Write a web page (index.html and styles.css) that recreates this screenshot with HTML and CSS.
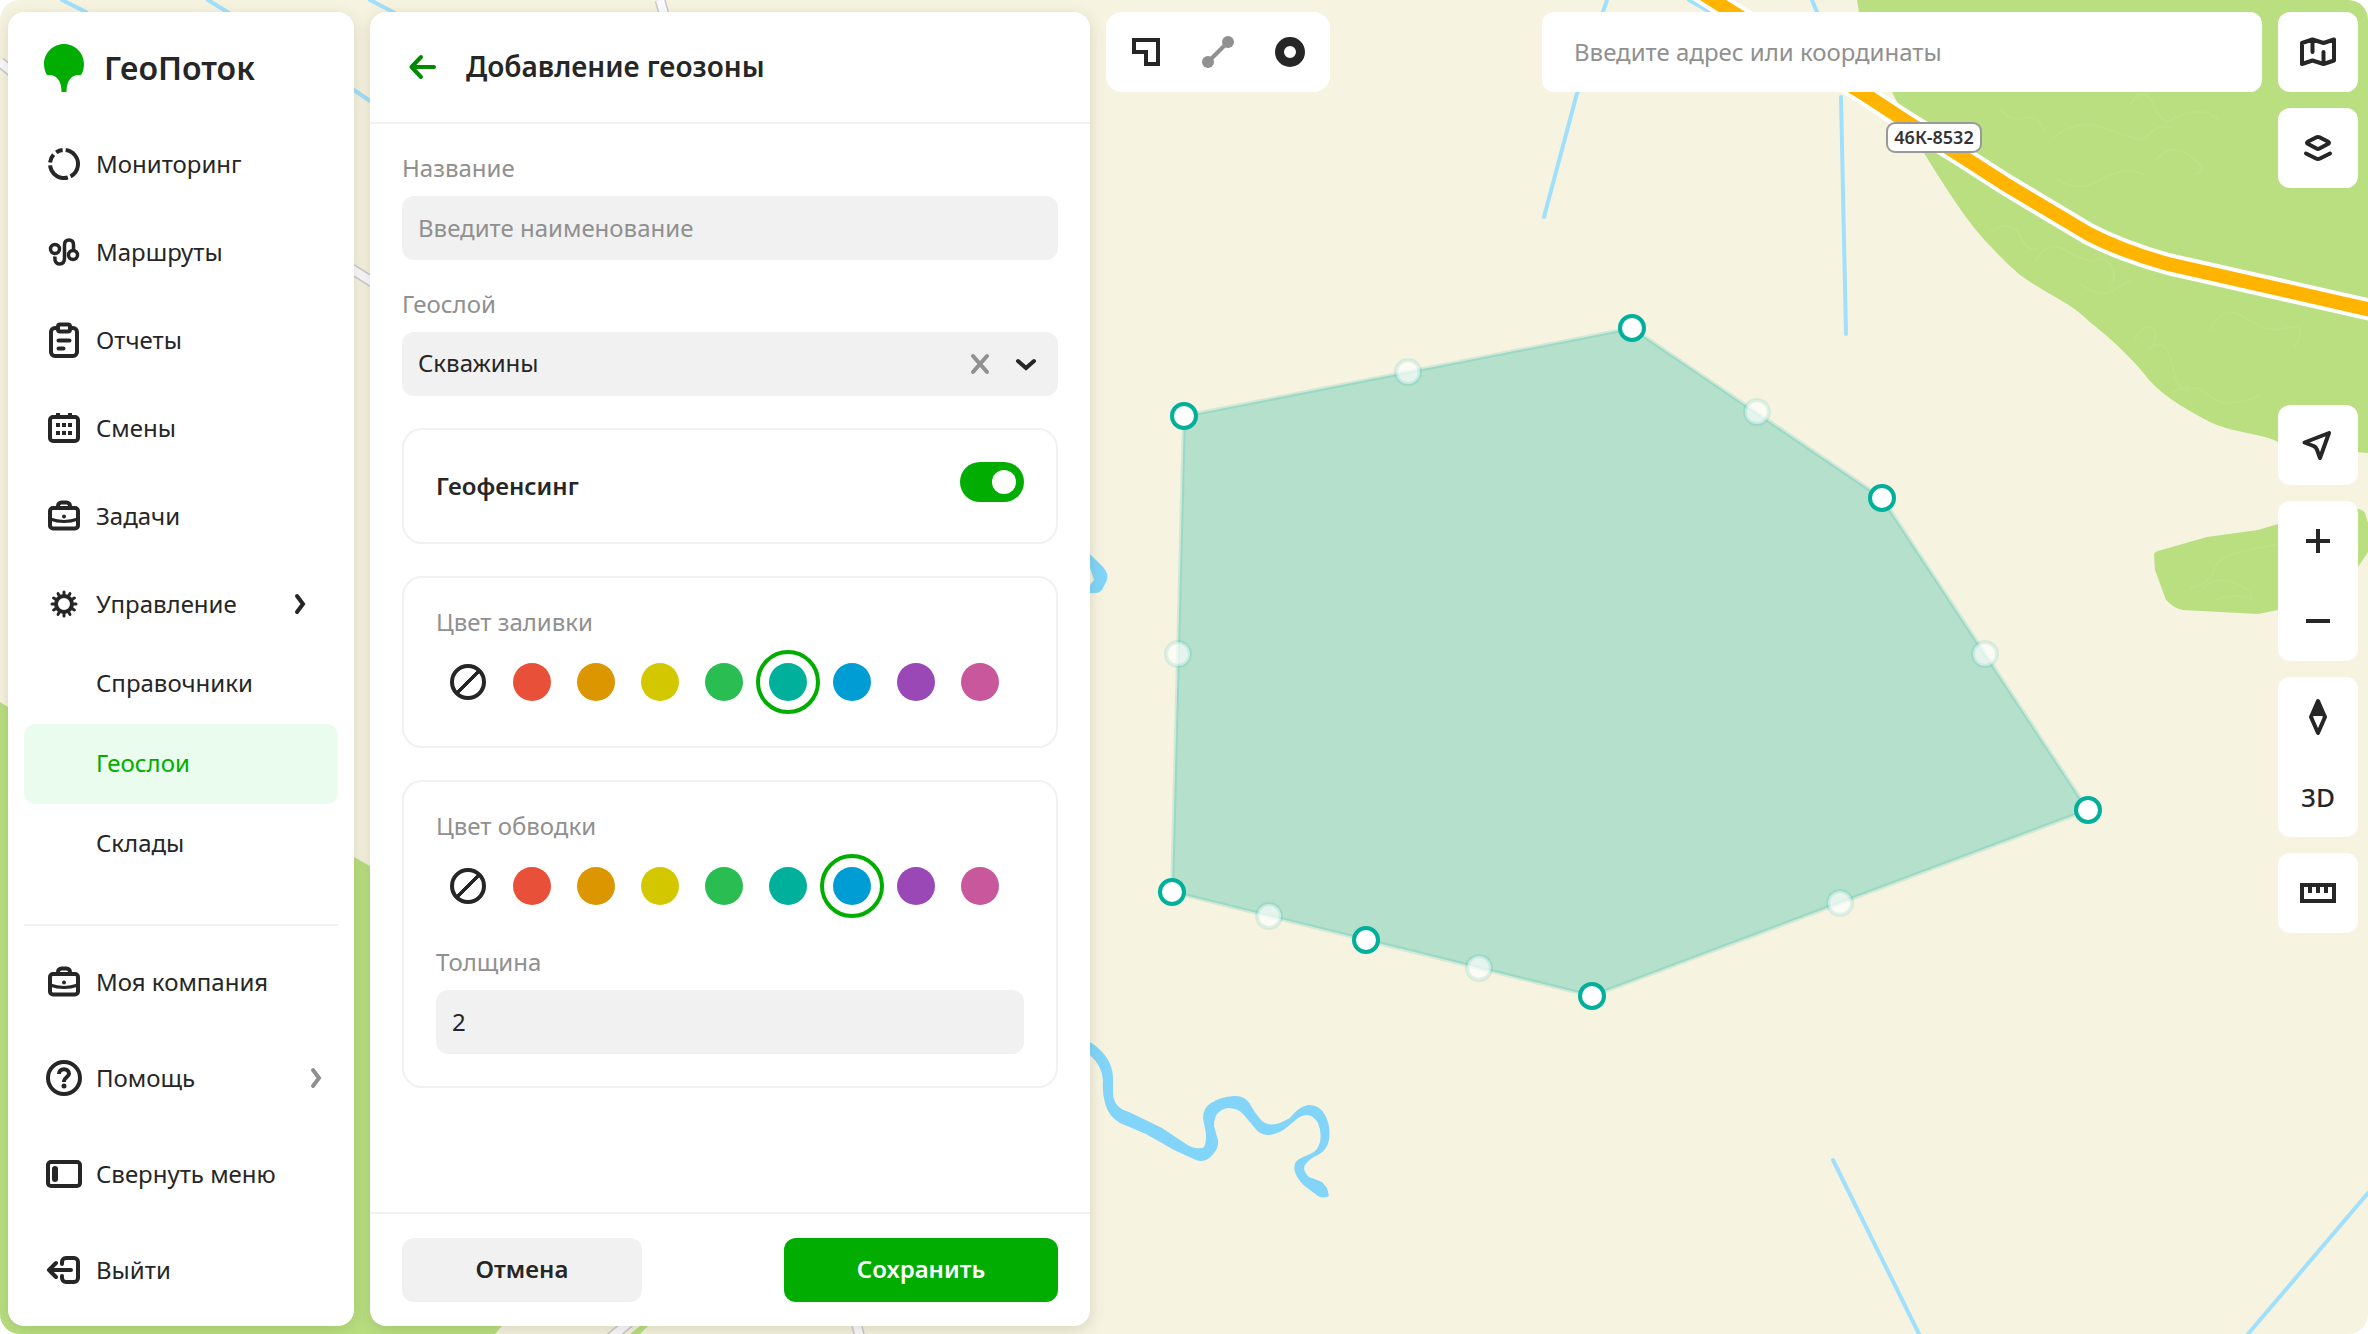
FILE: index.html
```html
<!DOCTYPE html>
<html lang="ru">
<head>
<meta charset="utf-8">
<title>ГеоПоток — Добавление геозоны</title>
<meta name="viewport" content="width=device-width, initial-scale=1">
<link rel="stylesheet" href="styles.css">
</head>
<body>
<div class="app">
  <svg class="map" viewBox="0 0 2368 1334" preserveAspectRatio="xMidYMid slice" role="img" aria-label="Карта с геозоной">
    <g class="forest">
      <path d="M0 702 8 707 354 857 370 866C430 1020 500 1180 502 1326L495 1334H0Z"/>
      <path d="M1857 0 1859 12 1892 92C1902 112 1913 132 1924 153Q1938 176 1956 203T1994 250Q2006 263 2020 275 2037 287 2057 298T2091 323Q2108 336 2125 353T2149 380Q2162 394 2180 405T2210 422 2247 433 2278 442Q2318 450 2368 453V0Z"/>
      <path d="M2158 551 2207 537 2258 530 2278 524 2350 508Q2362 508 2365 513L2368 523V552L2358 567C2340 594 2310 604 2278 610L2258 614 2183 610Q2175 609 2166 600L2155 570 2154 555Q2154 552 2158 551Z"/>
      <path d="M630 1334 640 1326H648L640 1334Z"/>
    </g>
    <g class="forest-lines">
      <path d="M2000 108q8 14 24 10t20 14M2052 138q26-20 52-10t40 12q12-18 30-12M2056 178q20 16 44 2t44-6M2130 104q14-20 24 2t20 12q30-14 44 2M2156 160q14-18 34-4t6 18M2035 262q12-24 34-10t32 6q20 10 10 26M1990 232q22-14 30 4t18 12M2080 284q20 14 30 8t22-12M2134 340q14-20 20-10t-6 20q18-16 24 14t18 26M2210 330q14-28 36-12t40 10q24-6 8 20M2172 392q24-10 38 4t50 0"/>
      <path d="M2190 588q20-4 24-18t34-20 32-6M2202 590q10-14 30-8t20 18M2214 600q26-8 38 0"/>
    </g>
    <g class="water">
      <path d="M62 0 86 12M208 0 354 90 370 101M370 0 395 13M1607 0 1603 12 1576 97 1544 217M1689 0 1710 12M1812 0 1817 12M1841 97 1846 334M1833 1160 1919 1334M2368 1193 2248 1334"/>
    </g>
    <g class="river">
      <path d="M1090 554 1103 567Q1109 574 1107 580L1102 590Q1098 594 1090 593V585L1094 580 1090 568Z"/>
      <path d="M1090 1055Q1102 1066 1103 1080 1102 1092 1105 1103 1108 1116 1120 1123L1146 1134 1174 1150 1196 1160Q1206 1164 1214 1153 1219 1147 1218 1140L1214 1126Q1214 1110 1228 1108 1238 1108 1243 1114L1254 1127Q1260 1136 1270 1135 1280 1133 1286 1128L1298 1118Q1310 1110 1318 1123 1322 1132 1320 1142 1318 1151 1310 1154L1301 1158Q1292 1162 1295 1172 1298 1181 1306 1187L1318 1196Q1324 1199 1329 1196L1327 1188 1322 1182 1309 1177Q1302 1170 1305 1165 1310 1158 1318 1155 1327 1150 1329 1140 1331 1126 1325 1115 1319 1104 1308 1105 1298 1107 1290 1118L1280 1123Q1268 1127 1261 1120 1254 1112 1250 1104 1244 1095 1234 1096 1220 1097 1211 1103 1203 1108 1203 1118L1206 1134Q1206 1148 1202 1148 1192 1149 1186 1144L1162 1128 1129 1112Q1114 1108 1113 1094L1113 1077Q1112 1056 1090 1042Z"/>
    </g>
    <g class="road-edge">
      <path d="M0 62 12 72M350 268 374 283M660 0 664 14M608 1340 632 1320M856 1322 860 1338"/>
    </g>
    <g class="road-fill">
      <path d="M0 62 12 72M350 268 374 283M660 0 664 14M608 1340 632 1320M856 1322 860 1338"/>
    </g>
    <path class="highway-edge" d="M1694-12 1732 12 1861 92 1907 122 1960 155 2005 184 2087 233Q2104 242 2125 250T2168 264L2230 278 2380 312"/>
    <path class="highway" d="M1694-12 1732 12 1861 92 1907 122 1960 155 2005 184 2087 233Q2104 242 2125 250T2168 264L2230 278 2380 312"/>
    <g>
      <rect class="shield" x="1887" y="123" width="94" height="29" rx="8"/>
      <text class="shield-text" x="1934" y="144">46К-8532</text>
    </g>
    <polygon class="zone" points="1184,416 1632,328 1882,498 2088,810 1592,996 1366,940 1172,892"/>
    <g class="midpoint">
      <circle cx="1408" cy="372" r="12"/><circle cx="1757" cy="412" r="12"/><circle cx="1985" cy="654" r="12"/><circle cx="1840" cy="903" r="12"/><circle cx="1479" cy="968" r="12"/><circle cx="1269" cy="916" r="12"/><circle cx="1178" cy="654" r="12"/>
    </g>
    <g class="vertex">
      <circle cx="1184" cy="416" r="12"/><circle cx="1632" cy="328" r="12"/><circle cx="1882" cy="498" r="12"/><circle cx="2088" cy="810" r="12"/><circle cx="1592" cy="996" r="12"/><circle cx="1366" cy="940" r="12"/><circle cx="1172" cy="892" r="12"/>
    </g>
  </svg>

  <aside class="sidebar">
    <div class="brand">
      <svg class="brand-mark" viewBox="0 0 40 48" aria-hidden="true"><path d="M20 0C31 0 40 9 40 20c0 4-1 8-3 11h-2C27 31 22.500 37 22.500 48h-5C17.500 37 13 31 5 31H3C1 28 0 24 0 20 0 9 9 0 20 0Z"/></svg>
      <span class="brand-name">ГеоПоток</span>
    </div>
    <nav class="nav">
      <a class="nav-item" href="#monitoring"><svg class="icon" viewBox="0 0 40 40"><circle cx="20" cy="20" r="14" pathLength="360" stroke-dasharray="145 12 100 12 36 14 28 13" transform="rotate(-83 20 20)"/></svg>Мониторинг</a>
      <a class="nav-item" href="#routes"><svg class="icon" viewBox="0 0 40 40"><g stroke-width="3.500"><circle cx="11" cy="17" r="4.500"/><circle cx="29" cy="23" r="4.500"/><path d="M11 24.500c-.5 4.500 1 7.500 4.500 7.500s5-2.500 5-6V13c0-3 1.500-5 4.500-5s4.500 2 4.500 5v5"/></g></svg>Маршруты</a>
      <a class="nav-item" href="#reports"><svg class="icon" viewBox="0 0 40 40"><rect x="7" y="8" width="26" height="28" rx="4"/><rect class="paper" x="14" y="4.500" width="12" height="7" rx="2"/><path d="M14.500 20.500h11M14.500 28.500h5" stroke-linecap="round"/></svg>Отчеты</a>
      <a class="nav-item" href="#shifts"><svg class="icon" viewBox="0 0 40 40"><rect x="6" y="9" width="28" height="24" rx="3"/><path d="M14 5v4M26 5v4M12 17h4M18 17h4M24 17h4M12 25h4M18 25h4M24 25h4"/></svg>Смены</a>
      <a class="nav-item" href="#tasks"><svg class="icon" viewBox="0 0 40 40"><rect x="6" y="12" width="28" height="20.500" rx="3"/><path d="M14 12v-2a3.500 3.500 0 0 1 3.500-3.500h5A3.500 3.500 0 0 1 26 10v2"/><path d="M6 23q14 5 28 0" stroke-width="3"/><circle class="solid" cx="20" cy="20.500" r="2"/></svg>Задачи</a>
      <a class="nav-item" href="#management"><svg class="icon" viewBox="0 0 40 40"><circle cx="20" cy="20" r="8"/><path d="M20 10V8M20 30v2M10 20H8M30 20h2M15 11.300l-1-1.700M25 11.300l1-1.700M15 28.700l-1 1.700M25 28.700l1 1.700M11.300 15l-1.700-1M28.700 15l1.700-1M11.300 25l-1.700 1M28.700 25l1.700 1" stroke-linecap="round" stroke-width="3"/></svg>Управление<svg class="chevron" viewBox="0 0 12 24"><path d="M3 4 9 12 3 20"/></svg></a>
      <div class="subnav">
        <a class="sub-item" href="#directories">Справочники</a>
        <a class="sub-item active" href="#geolayers" aria-current="page">Геослои</a>
        <a class="sub-item" href="#warehouses">Склады</a>
      </div>
    </nav>
    <nav class="nav-bottom">
      <a class="nav-item" href="#company"><svg class="icon" viewBox="0 0 40 40"><rect x="6" y="12" width="28" height="20.500" rx="3"/><path d="M14 12v-2a3.500 3.500 0 0 1 3.500-3.500h5A3.500 3.500 0 0 1 26 10v2"/><path d="M6 23q14 5 28 0" stroke-width="3"/><circle class="solid" cx="20" cy="20.500" r="2"/></svg>Моя компания</a>
      <a class="nav-item" href="#help"><svg class="icon" viewBox="0 0 40 40"><circle cx="20" cy="20" r="16"/><path d="M15 16c0-3 2-4.800 5-4.800s5 1.800 5 4.600c0 3.200-5 3.700-5 7.200v1"/><circle class="solid" cx="20" cy="28" r="2.500"/></svg>Помощь<svg class="chevron muted" viewBox="0 0 12 24"><path d="M3 4 9 12 3 20"/></svg></a>
      <button class="nav-item" type="button"><svg class="icon" viewBox="0 0 40 40"><rect x="4" y="8" width="32" height="24" rx="3"/><rect class="solid" x="8" y="12" width="6" height="16" rx="3"/></svg>Свернуть меню</button>
      <button class="nav-item" type="button"><svg class="icon" viewBox="0 0 40 40"><path d="M27 20H5M12 13l-7 7 7 7M18 14v-2a4 4 0 0 1 4-4h8a4 4 0 0 1 4 4v16a4 4 0 0 1-4 4h-8a4 4 0 0 1-4-4v-2" stroke-linecap="round" stroke-linejoin="round"/></svg>Выйти</button>
    </nav>
  </aside>

  <form class="panel">
    <header class="panel-head">
      <button class="back" type="button" aria-label="Назад"><svg class="icon" viewBox="0 0 40 40"><path d="M32 20H10M19 10 9.500 20 19 30" stroke-linecap="round" stroke-linejoin="round"/></svg></button>
      <h1 class="panel-title">Добавление геозоны</h1>
    </header>
    <div class="panel-body">
      <div class="field">
        <label class="label" for="zone-name">Название</label>
        <input class="control" id="zone-name" type="text" placeholder="Введите наименование">
      </div>
      <div class="field">
        <label class="label" for="zone-layer">Геослой</label>
        <div class="select">
          <select class="control" id="zone-layer"><option>Скважины</option></select>
          <div class="select-tools">
            <button class="clear" type="button" aria-label="Очистить"><svg viewBox="0 0 24 24"><path d="M5 4l14 16M19 4 5 20"/></svg></button>
            <svg class="select-arrow" viewBox="0 0 24 24" aria-hidden="true"><path d="M4 9l8 7 8-7"/></svg>
          </div>
        </div>
      </div>
      <div class="card card-row">
        <label class="card-title" for="geofencing">Геофенсинг</label>
        <input class="toggle" id="geofencing" type="checkbox" checked>
      </div>
      <div class="card">
        <div class="field">
          <span class="label" id="fill-label">Цвет заливки</span>
          <div class="swatches" role="radiogroup" aria-labelledby="fill-label">
            <input class="swatch none" type="radio" name="fill" aria-label="Без заливки">
            <input class="swatch red" type="radio" name="fill" aria-label="Красный">
            <input class="swatch orange" type="radio" name="fill" aria-label="Оранжевый">
            <input class="swatch yellow" type="radio" name="fill" aria-label="Жёлтый">
            <input class="swatch green" type="radio" name="fill" aria-label="Зелёный">
            <input class="swatch teal" type="radio" name="fill" aria-label="Бирюзовый" checked>
            <input class="swatch blue" type="radio" name="fill" aria-label="Синий">
            <input class="swatch purple" type="radio" name="fill" aria-label="Фиолетовый">
            <input class="swatch pink" type="radio" name="fill" aria-label="Розовый">
          </div>
        </div>
      </div>
      <div class="card">
        <div class="field">
          <span class="label" id="stroke-label">Цвет обводки</span>
          <div class="swatches" role="radiogroup" aria-labelledby="stroke-label">
            <input class="swatch none" type="radio" name="stroke" aria-label="Без обводки">
            <input class="swatch red" type="radio" name="stroke" aria-label="Красный">
            <input class="swatch orange" type="radio" name="stroke" aria-label="Оранжевый">
            <input class="swatch yellow" type="radio" name="stroke" aria-label="Жёлтый">
            <input class="swatch green" type="radio" name="stroke" aria-label="Зелёный">
            <input class="swatch teal" type="radio" name="stroke" aria-label="Бирюзовый">
            <input class="swatch blue" type="radio" name="stroke" aria-label="Синий" checked>
            <input class="swatch purple" type="radio" name="stroke" aria-label="Фиолетовый">
            <input class="swatch pink" type="radio" name="stroke" aria-label="Розовый">
          </div>
        </div>
        <div class="field">
          <label class="label" for="stroke-width">Толщина</label>
          <input class="control" id="stroke-width" type="text" inputmode="numeric" value="2">
        </div>
      </div>
    </div>
    <footer class="panel-foot">
      <button class="btn" type="button">Отмена</button>
      <button class="btn primary" type="submit">Сохранить</button>
    </footer>
  </form>

  <main class="stage">
    <div class="toolbar">
      <button class="tool" type="button" aria-label="Полигон"><svg class="icon" viewBox="0 0 40 40"><path d="M8 8H32V32H20V20H8Z"/></svg></button>
      <button class="tool muted" type="button" aria-label="Линия"><svg class="icon" viewBox="0 0 40 40"><path d="M10 30 30 10"/><circle class="solid" cx="10" cy="30" r="6"/><circle class="solid" cx="30" cy="10" r="6"/></svg></button>
      <button class="tool" type="button" aria-label="Круг"><svg class="icon" viewBox="0 0 40 40"><circle cx="20" cy="20" r="10.500" stroke-width="9"/></svg></button>
    </div>
    <input class="search" type="search" placeholder="Введите адрес или координаты" aria-label="Поиск по адресу или координатам">
  </main>

  <div class="controls">
    <div class="controls-top">
      <div class="pad"><button class="pad-btn" type="button" aria-label="Карта"><svg class="icon" viewBox="0 0 40 40"><path d="M4 11l10.500-3.500L25.500 11 36 7.500V28.500L25.500 32 14.500 28.500 4 32ZM14.500 8v12M25.500 20v12" stroke-linecap="round" stroke-linejoin="round"/></svg></button></div>
      <div class="pad"><button class="pad-btn" type="button" aria-label="Слои"><svg class="icon" viewBox="0 0 40 40"><path d="M18.500 9.300q1.500-.8 3 0l8.800 4.500q1.500 1 0 2l-8.800 4.700q-1.500.8-3 0l-8.800-4.700q-1.500-1 0-2ZM8 25.500l10 5q2 1 4 0l10-5" stroke-linecap="round" stroke-linejoin="round"/></svg></button></div>
    </div>
    <div class="controls-mid">
      <div class="pad"><button class="pad-btn" type="button" aria-label="Моё местоположение"><svg class="icon" viewBox="0 0 40 40"><path d="M31 8 6.500 17.500l9 3.500q2.500.8 3.300 3.300L22 33Z" stroke-linejoin="round"/></svg></button></div>
      <div class="pad">
        <button class="pad-btn" type="button" aria-label="Приблизить"><svg class="icon" viewBox="0 0 40 40"><path d="M8 20h24M20 8v24"/></svg></button>
        <button class="pad-btn" type="button" aria-label="Отдалить"><svg class="icon" viewBox="0 0 40 40"><path d="M8 20h24"/></svg></button>
      </div>
      <div class="pad">
        <button class="pad-btn" type="button" aria-label="Север"><svg class="icon" viewBox="0 0 40 40"><path d="M20 4 27 20 20 36 13 20Z" stroke-width="4" stroke-linejoin="round"/><path class="solid" d="M20 3 28 19H12Z"/></svg></button>
        <button class="pad-btn" type="button">3D</button>
      </div>
      <div class="pad"><button class="pad-btn" type="button" aria-label="Линейка"><svg class="icon" viewBox="0 0 40 40"><path d="M4 12h32v16H4ZM12 12v8M20 12v8M28 12v8"/></svg></button></div>
    </div>
  </div>
</div>
</body>
</html>
```

FILE: styles.css
```css
:root {
  --ink: #262626;
  --muted: #909090;
  --line: #f1f1f1;
  --field: #f1f1f1;
  --green: #00ad00;
}

*, *::before { box-sizing: border-box; }

body {
  margin: 0;
  background: #fff;
  color: var(--ink);
  font: 24px/32px "Noto Sans", "Open Sans", sans-serif;
}

button, input, select {
  margin: 0;
  border: 0;
  background: none;
  color: inherit;
  font: inherit;
}

button { padding: 0; cursor: pointer; }
a { color: inherit; text-decoration: none; }

.app {
  position: relative;
  display: flex;
  gap: 16px;
  min-height: 100vh;
  padding: 12px 10px 8px 8px;
  border-radius: 20px;
  overflow: hidden;
}

.icon {
  flex: none;
  width: 40px;
  height: 40px;
  fill: none;
  stroke: currentColor;
  stroke-width: 4;
}
.icon .solid { fill: currentColor; stroke: none; }
.icon .paper { fill: #fff; }

/* Map */
.map {
  position: absolute;
  inset: 0;
  width: 100%;
  height: 100%;
  background: #f6f3e0;
}
.forest { fill: #b9df80; }
.forest-lines { fill: none; stroke: #bde286; stroke-width: 2; }
.water { fill: none; stroke: #a1e0fc; stroke-width: 4; stroke-linecap: round; }
.river { fill: #82d5f8; }
.road-edge { fill: none; stroke: #cbcac8; stroke-width: 11; }
.road-fill { fill: none; stroke: #fbfaff; stroke-width: 8; }
.highway-edge { fill: none; stroke: #fff; stroke-width: 22; }
.highway { fill: none; stroke: #ffb400; stroke-width: 14; }
.shield { fill: #fff; stroke: #999; stroke-width: 2; }
.shield-text { fill: #333; font-size: 18px; font-weight: 600; text-anchor: middle; }
.zone { fill: #b4e0cc; stroke: #00b09b; stroke-opacity: .14; stroke-width: 4; }
.midpoint { fill: #fff; fill-opacity: .65; stroke: #00b09b; stroke-opacity: .12; stroke-width: 4; }
.vertex { fill: #fff; stroke: #00b09b; stroke-width: 4; }

/* Sidebar */
.sidebar, .panel {
  position: relative;
  display: flex;
  flex-direction: column;
  flex: none;
  background: #fff;
  border-radius: 16px;
  box-shadow: 0 4px 16px rgba(60, 60, 30, .16);
}
.sidebar { width: 346px; padding: 0 16px 16px; }
.brand {
  display: flex;
  align-items: center;
  gap: 20px;
  height: 112px;
  padding-left: 20px;
}
.brand-mark { width: 40px; height: 48px; fill: var(--green); }
.brand-name { font-size: 32px; font-weight: 600; }
.nav { display: flex; flex-direction: column; gap: 8px; }
.nav-item {
  display: flex;
  align-items: center;
  gap: 12px;
  width: 100%;
  height: 80px;
  padding: 0 16px 0 20px;
  border-radius: 12px;
  text-align: left;
}
.chevron {
  width: 12px;
  height: 24px;
  margin-left: auto;
  fill: none;
  stroke: currentColor;
  stroke-width: 4;
  stroke-linecap: round;
}
.nav .chevron { margin-right: 16px; }
.muted { color: var(--muted); }
.subnav { margin-top: -8px; }
.sub-item {
  display: flex;
  align-items: center;
  height: 80px;
  padding: 0 16px 2px 72px;
  border-radius: 12px;
}
.sub-item.active { background: #e9fced; color: var(--green); }
.nav-bottom {
  display: flex;
  flex-direction: column;
  gap: 16px;
  margin-top: auto;
  padding-top: 16px;
  border-top: 2px solid var(--line);
}

/* Geozone form */
.panel { width: 720px; }
.panel-head {
  display: flex;
  align-items: center;
  gap: 24px;
  height: 112px;
  padding: 0 32px;
  border-bottom: 2px solid var(--line);
}
.back { height: 40px; color: #008a00; }
.panel-title { margin: 0; padding-bottom: 2px; font-size: 28px; font-weight: 600; }
.panel-body {
  display: flex;
  flex: 1;
  flex-direction: column;
  gap: 32px;
  padding: 32px;
}
.field { display: flex; flex-direction: column; gap: 16px; }
.label { color: var(--muted); line-height: 24px; }
.control {
  width: 100%;
  height: 64px;
  padding: 0 16px 2px;
  border-radius: 12px;
  background: var(--field);
  appearance: none;
}
::placeholder { color: var(--muted); opacity: 1; }
.select { position: relative; }
.select-tools {
  position: absolute;
  inset: 0 20px 0 auto;
  display: flex;
  align-items: center;
  gap: 22px;
  pointer-events: none;
}
.select-tools svg {
  display: block;
  width: 24px;
  height: 24px;
  fill: none;
  stroke: currentColor;
  stroke-width: 4;
  stroke-linecap: round;
}
.clear { color: var(--muted); pointer-events: auto; }
.card {
  display: flex;
  flex-direction: column;
  gap: 32px;
  padding: 32px;
  border: 2px solid var(--line);
  border-radius: 20px;
}
.card-row { flex-direction: row; justify-content: space-between; }
.card-title { font-weight: 600; line-height: 48px; }
.toggle {
  display: flex;
  justify-content: flex-end;
  width: 64px;
  height: 40px;
  padding: 8px;
  border-radius: 20px;
  background: var(--green);
  appearance: none;
}
.toggle::before {
  width: 24px;
  height: 24px;
  border-radius: 50%;
  background: #fff;
  content: "";
}
.toggle:not(:checked) { justify-content: flex-start; background: #c4c4c4; }
.swatches { display: flex; }
.swatch {
  display: grid;
  place-items: center;
  width: 64px;
  height: 64px;
  border: 4px solid transparent;
  border-radius: 50%;
  appearance: none;
}
.swatch:checked { border-color: var(--green); }
.swatch::before {
  width: 38px;
  height: 38px;
  border-radius: 50%;
  background: currentColor;
  content: "";
}
.swatch.none::before {
  width: 36px;
  height: 36px;
  border: 4px solid var(--ink);
  background: linear-gradient(135deg, transparent 45%, var(--ink) 45%, var(--ink) 55%, transparent 55%);
}
.red { color: #e95039; }
.orange { color: #dc9600; }
.yellow { color: #d3c800; }
.green { color: #2abd52; }
.teal { color: #00b09b; }
.blue { color: #009cd4; }
.purple { color: #9a48b6; }
.pink { color: #c8579b; }
.panel-foot {
  display: flex;
  justify-content: space-between;
  padding: 24px 32px;
  border-top: 2px solid var(--line);
}
.btn {
  min-width: 240px;
  height: 64px;
  padding: 0 32px 2px;
  border-radius: 12px;
  background: var(--field);
  font-weight: 600;
}
.btn.primary { min-width: 274px; background: var(--green); color: #fff; }

/* Map controls */
.stage {
  position: relative;
  display: flex;
  flex: 1;
  justify-content: space-between;
  align-items: flex-start;
  gap: 16px;
}
.toolbar {
  display: flex;
  padding: 0 4px;
  border-radius: 16px;
  background: #fff;
}
.tool {
  display: grid;
  place-items: center;
  width: 72px;
  height: 80px;
}
.search {
  width: 720px;
  height: 80px;
  padding: 0 32px 2px;
  border-radius: 12px;
  background: #fff;
  appearance: none;
}
.controls {
  position: relative;
  display: grid;
  grid-template-rows: 1fr auto 1fr;
  flex: none;
  width: 80px;
}
.controls-top, .controls-mid {
  display: flex;
  flex-direction: column;
  gap: 16px;
}
.pad { border-radius: 12px; background: #fff; }
.pad-btn {
  display: grid;
  place-items: center;
  width: 80px;
  height: 80px;
  font-size: 26px;
  font-weight: 500;
}
```
